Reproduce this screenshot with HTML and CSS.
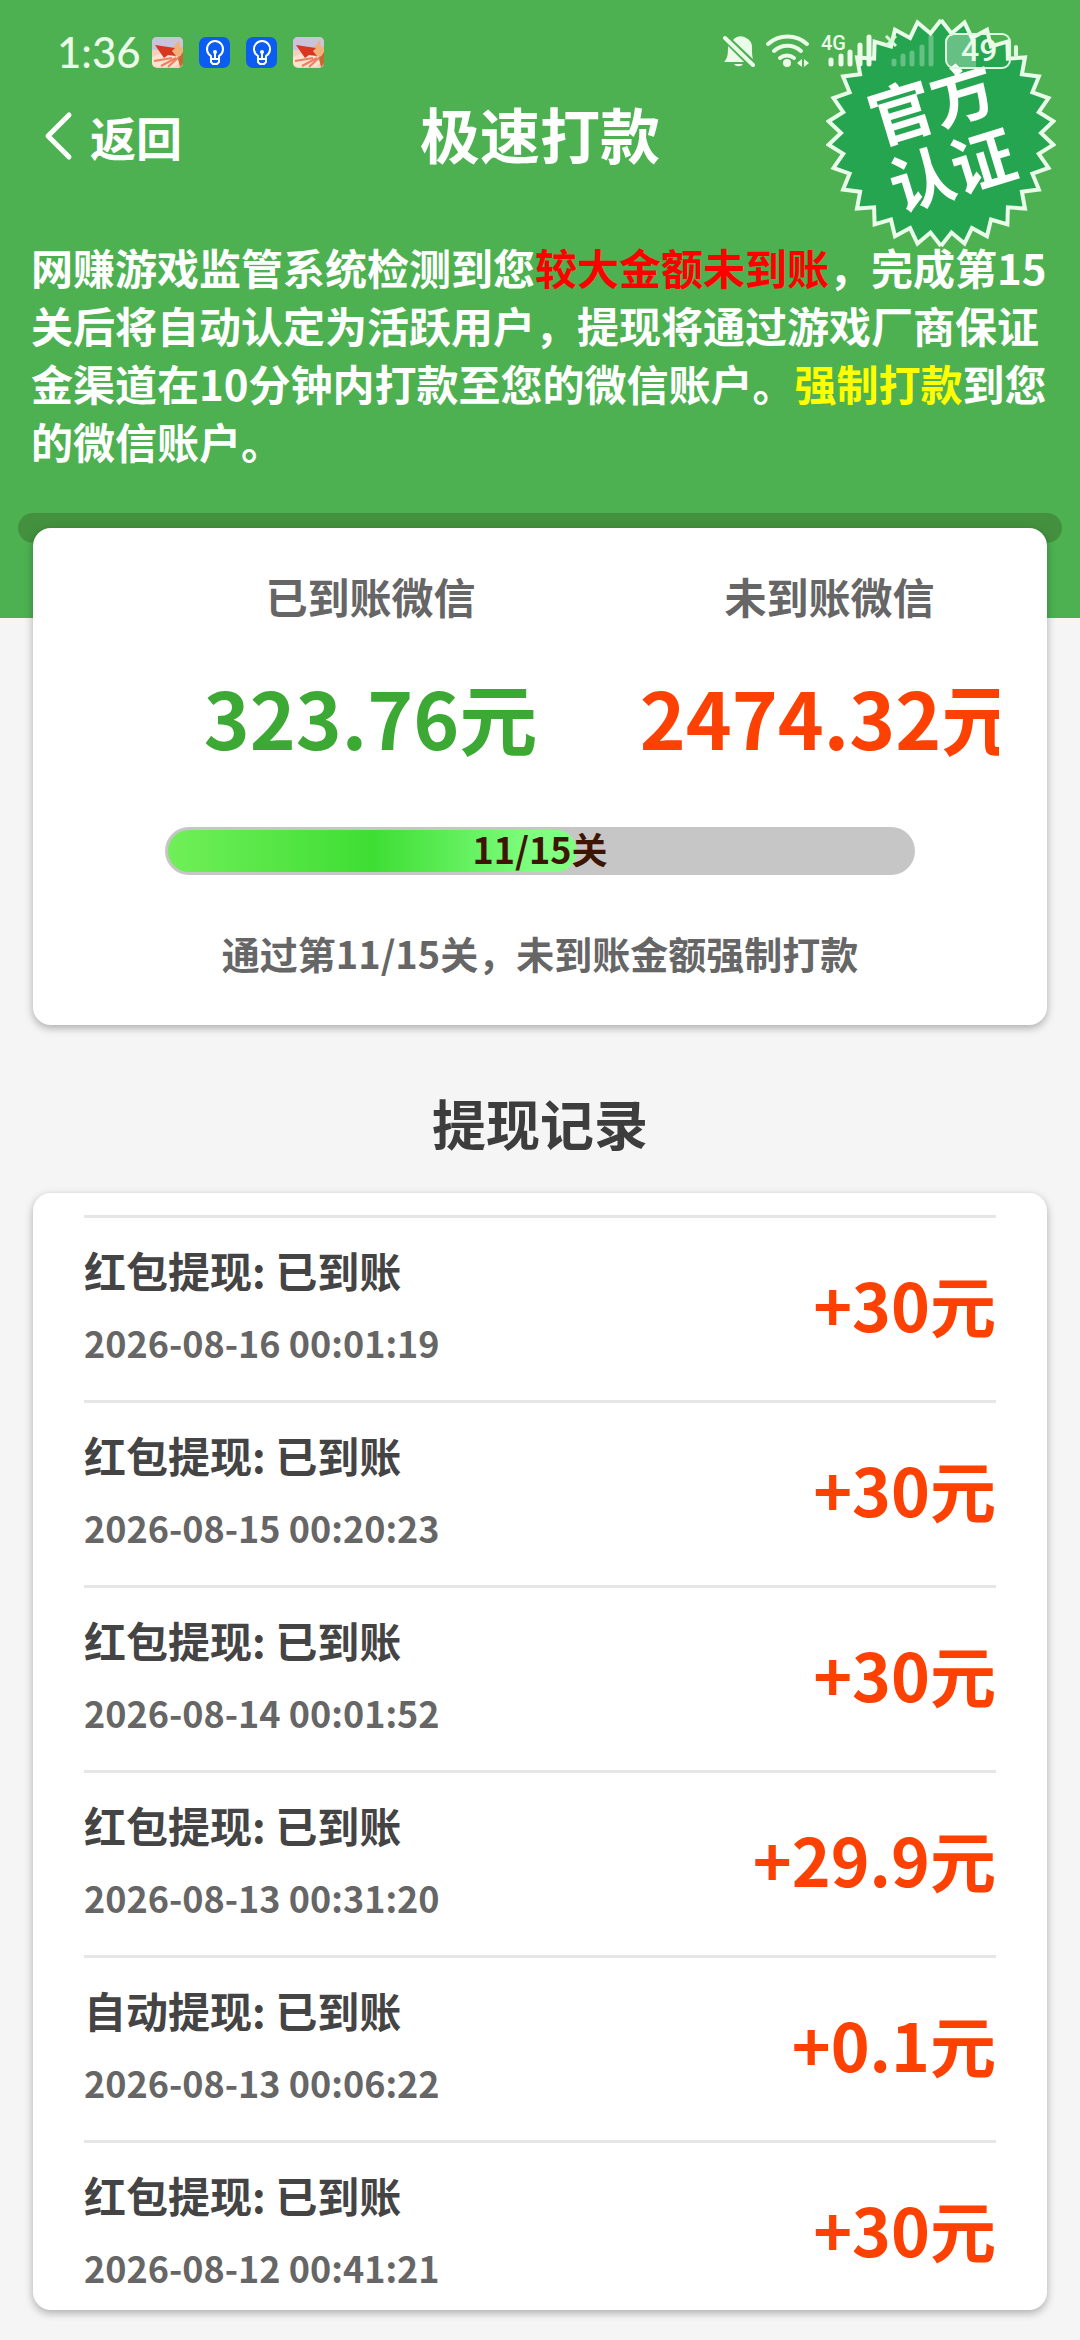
FILE: index.html
```html
<!DOCTYPE html>
<html lang="zh-CN">

<head>
    <meta charset="UTF-8">
    <meta name="viewport" content="width=device-width, initial-scale=1.0">
    <title>极速打款</title>
    <link rel="stylesheet" href="styles.css">
</head>

<body>
    <!-- shared shapes -->
    <svg class="defs" aria-hidden="true">
        <symbol id="photo" viewBox="0 0 31 31">
            <rect width="31" height="31" rx="5" fill="#f6cfc0" />
            <path d="M5 0h21a5 5 0 0 1 5 5v8H0V5a5 5 0 0 1 5-5z" fill="#c9c3dc" />
            <path d="M0 20l10-4 8 3 13-5v9l-9 7H5a5 5 0 0 1-5-5z" fill="#fbe3cf" />
            <path d="M20 12l7-9 1 8 3-2v8l-8 3z" fill="#f0b27a" />
            <path d="M3 8l20 3-3 3 4 5-8-1-4 3z" fill="#d8361f" />
            <path d="M2 24l18-3M9 29l15-8M16 30l12-11" stroke="#ee7f62" stroke-width="2" fill="none" />
            <path d="M31 15v11a5 5 0 0 1-3 4l-2-8z" fill="#c8692f" />
        </symbol>
        <symbol id="bulb" viewBox="0 0 31 31">
            <rect width="31" height="31" rx="7" fill="#0b5cf0" />
            <g fill="none" stroke="#fff" stroke-width="2" stroke-linejoin="round">
                <path d="M12 22v-3a8 8 0 1 1 8 0v3z" />
                <path d="M12 22v3l2 2h4l2-2v-3M16 16v6" />
            </g>
            <circle cx="16" cy="15" r="2" fill="#fff" />
        </symbol>
        <path id="teeth" d="M0-113L10.5-99.5 23.5-110.5 30.9-95.1 46-103.2 50-86.6 66.4-91.4 66.9-74.3 84-75.6 80.9-58.8 97.9-56.5 91.4-40.7 107.5-34.9 97.8-20.8 112.4-11.8 100 0 112.4 11.8 97.8 20.8 107.5 34.9 91.4 40.7 97.9 56.5 80.9 58.8 84 75.6 66.9 74.3 66.4 91.4 50 86.6 46 103.2 30.9 95.1 23.5 110.5 10.5 99.5 0 113" />
    </svg>

    <header class="header">
        <div class="status">
            <span class="time">1:36</span>
            <div class="apps">
                <svg><use href="#photo" /></svg>
                <svg><use href="#bulb" /></svg>
                <svg><use href="#bulb" /></svg>
                <svg><use href="#photo" /></svg>
            </div>
            <svg class="system" viewBox="0 0 300 40" aria-hidden="true">
                <!-- muted bell -->
                <g fill="#eafbe8">
                    <path d="M10 8a11 11 0 0 1 19 8c0 5 0 8 1 11z" />
                    <path d="M5 14l16 16H1c4-4 4-9 4-16zM11 32h9a5 4 0 0 1-9 0z" />
                    <path d="M2 6l28 27" stroke="#eafbe8" stroke-width="4" stroke-linecap="round" />
                </g>
                <!-- wifi -->
                <g fill="none" stroke="#eafbe8" stroke-width="4" stroke-linecap="round">
                    <path d="M45 12a29 29 0 0 1 39 0M51 19a20 20 0 0 1 27 0M57 26a11 11 0 0 1 14 0" />
                </g>
                <circle cx="64" cy="31" r="4" fill="#eafbe8" />
                <path d="M79 27v8l-5-4zM81 27v8l5-4z" fill="#eafbe8" />
                <!-- signal -->
                <text class="net" x="98" y="18">4G</text>
                <g stroke="#eafbe8" stroke-width="5" stroke-linecap="round">
                    <path d="M108 28v4M118 24v8M127 20v12M137 13v19M146 5v27" />
                </g>
                <path d="M163 4l10 10M173 4l-10 10" stroke="#d9f7da" stroke-width="3" />
                <g stroke="#fff" stroke-opacity=".3" stroke-width="5" stroke-linecap="round">
                    <path d="M171 29v3M180 24v8M189 21v11M199 15v17M208 5v27" />
                </g>
                <!-- battery -->
                <path d="M237 2h-7a8 8 0 0 0-8 8v17a8 8 0 0 0 8 8h23V2z" fill="#fff" fill-opacity=".3" />
                <rect x="223" y="2" width="64" height="34" rx="8" fill="none" stroke="#dff7df" stroke-width="2" />
                <path d="M293 15v8" stroke="#dff7df" stroke-width="4" stroke-linecap="round" />
                <text class="level" x="238" y="29">49</text>
            </svg>
        </div>

        <div class="nav">
            <button type="button" class="back" onclick="history.back()">
                <svg viewBox="0 0 30 50" aria-hidden="true">
                    <path d="M25 4L4 25l21 21" fill="none" stroke="#fff" stroke-width="5" stroke-linecap="round" stroke-linejoin="round" />
                </svg>
                返回
            </button>
            <h1>极速打款</h1>
        </div>

        <p class="notice">网赚游戏监管系统检测到您<span class="red">较大金额未到账</span>，完成第15关后将自动认定为活跃用户，提现将通过游戏厂商保证金渠道在10分钟内打款至您的微信账户。<span class="yellow">强制打款</span>到您的微信账户。</p>

        <div class="slot"></div>

        <div class="badge">
            <svg viewBox="-115 -115 230 230" aria-hidden="true">
                <g fill="#25a550" stroke="#e9fbe9" stroke-width="4">
                    <use href="#teeth" />
                    <use href="#teeth" transform="scale(-1 1)" />
                </g>
            </svg>
            <span>官方<br>认证</span>
        </div>
    </header>

    <section class="card summary">
        <div class="clip">
            <div class="amounts">
                <div>
                    <p class="label">已到账微信</p>
                    <p class="value green">323.76元</p>
                </div>
                <div>
                    <p class="label">未到账微信</p>
                    <p class="value orange">2474.32元</p>
                </div>
            </div>
        </div>
        <div class="progress">
            <div class="bar" style="width: 55%"></div>
            <span>11/15关</span>
        </div>
        <p class="tip">通过第11/15关，未到账金额强制打款</p>
    </section>

    <h2>提现记录</h2>

    <section class="card list">
        <div class="item">
            <div>
                <p class="name">红包提现: 已到账</p>
                <p class="date">2026-08-16 00:01:19</p>
            </div>
            <span class="money">+30元</span>
        </div>
        <div class="item">
            <div>
                <p class="name">红包提现: 已到账</p>
                <p class="date">2026-08-15 00:20:23</p>
            </div>
            <span class="money">+30元</span>
        </div>
        <div class="item">
            <div>
                <p class="name">红包提现: 已到账</p>
                <p class="date">2026-08-14 00:01:52</p>
            </div>
            <span class="money">+30元</span>
        </div>
        <div class="item">
            <div>
                <p class="name">红包提现: 已到账</p>
                <p class="date">2026-08-13 00:31:20</p>
            </div>
            <span class="money">+29.9元</span>
        </div>
        <div class="item">
            <div>
                <p class="name">自动提现: 已到账</p>
                <p class="date">2026-08-13 00:06:22</p>
            </div>
            <span class="money">+0.1元</span>
        </div>
        <div class="item">
            <div>
                <p class="name">红包提现: 已到账</p>
                <p class="date">2026-08-12 00:41:21</p>
            </div>
            <span class="money">+30元</span>
        </div>
    </section>
</body>

</html>
```
FILE: styles.css
```css
* {
    box-sizing: border-box;
    margin: 0;
    padding: 0;
}

body {
    display: flex;
    flex-direction: column;
    height: 100vh;
    background-color: #f5f5f5;
    color: #444;
    font-family: "Noto Sans CJK SC", sans-serif;
    font-weight: 700;
}

svg {
    display: block;
}

.defs {
    position: absolute;
    width: 0;
    height: 0;
}

.header {
    position: relative;
    flex-shrink: 0;
    padding-bottom: 75px;
    background-color: #4db151;
    color: #fff;
}

/* status bar */
.status {
    position: relative;
    z-index: 2;
    display: flex;
    align-items: center;
    height: 104px;
    padding: 0 57px;
}

.time {
    width: 95px;
    color: #eafbe8;
    font-family: Lato, sans-serif;
    font-size: 42px;
    font-weight: 500;
}

.apps {
    display: flex;
    gap: 16px;
}

.apps svg {
    width: 31px;
    height: 31px;
}

.system {
    width: 300px;
    height: 40px;
    margin-left: auto;
    fill: #eafbe8;
}

.net {
    font: 500 20px Roboto, sans-serif;
}

.level {
    font: 500 32px Roboto, sans-serif;
}

/* title row */
.nav {
    display: grid;
    grid-template-columns: 1fr auto 1fr;
    align-items: center;
    height: 58px;
    padding: 0 44px;
}

.back {
    display: flex;
    align-items: center;
    gap: 16px;
    border: none;
    background: none;
    color: #fff;
    font: inherit;
    font-size: 46px;
    line-height: 58px;
    cursor: pointer;
}

.back svg {
    width: 30px;
    height: 50px;
}

h1 {
    padding-bottom: 6px;
    font-size: 60px;
    line-height: 58px;
}

.notice {
    margin: 76px 31px 0;
    font-size: 42px;
    line-height: 58px;
}

.red {
    color: #f00;
}

.yellow {
    color: #ff0;
}

.slot {
    height: 30px;
    margin: 43px 18px 0;
    border-radius: 15px;
    background-color: #43913f;
}

.badge {
    position: absolute;
    top: 18px;
    right: 24px;
    display: grid;
    place-items: center;
    width: 230px;
    height: 230px;
}

.badge > * {
    grid-area: 1 / 1;
}

.badge svg {
    width: 230px;
    height: 230px;
}

.badge span {
    font-size: 64px;
    line-height: 70px;
    transform: rotate(-17deg);
}

/* cards */
.card {
    position: relative;
    margin: 0 33px;
    border-radius: 18px;
    background-color: #fff;
    box-shadow: 0 3px 8px rgba(0, 0, 0, 0.3);
}

.summary {
    flex-shrink: 0;
    margin-top: -90px;
    padding: 38px 0 42px;
    text-align: center;
}

.clip {
    margin: 0 48px;
    overflow: hidden;
}

.amounts {
    display: grid;
    grid-template-columns: 1fr 1fr;
    margin: 0 -60px 0 60px;
}

.label {
    color: #666;
    font-size: 42px;
    line-height: 60px;
}

.value {
    margin-top: 40px;
    font-size: 78px;
    line-height: 100px;
}

.green {
    color: #3da935;
}

.orange {
    color: #fc4103;
}

.progress {
    position: relative;
    width: 74%;
    height: 48px;
    margin: 61px auto 0;
    padding: 3px;
    border-radius: 24px;
    background-color: #c6c6c6;
}

.bar {
    height: 100%;
    border-radius: 21px;
    background: linear-gradient(90deg, #70ef58, #3ede34 50%, #80ff80 90%);
}

.progress span {
    position: absolute;
    inset: 0;
    color: #3d1500;
    font-size: 36px;
    line-height: 42px;
}

.tip {
    margin-top: 48px;
    color: #666;
    font-size: 38px;
    line-height: 60px;
}

h2 {
    flex-shrink: 0;
    padding: 68px 0 40px;
    color: #3d3d3d;
    font-size: 54px;
    line-height: 60px;
    text-align: center;
}

.list {
    flex: 1;
    min-height: 0;
    margin-bottom: 30px;
    padding: 22px 51px 0;
    overflow: hidden;
}

.item {
    display: flex;
    justify-content: space-between;
    align-items: center;
    height: 185px;
    padding-bottom: 6px;
    border-top: 3px solid #e6e6e6;
}

.name {
    font-size: 42px;
    line-height: 72px;
}

.date {
    color: #666;
    font-size: 36px;
    line-height: 72px;
}

.money {
    padding-bottom: 6px;
    color: #fc4103;
    font-size: 66px;
    line-height: 100px;
}
```
